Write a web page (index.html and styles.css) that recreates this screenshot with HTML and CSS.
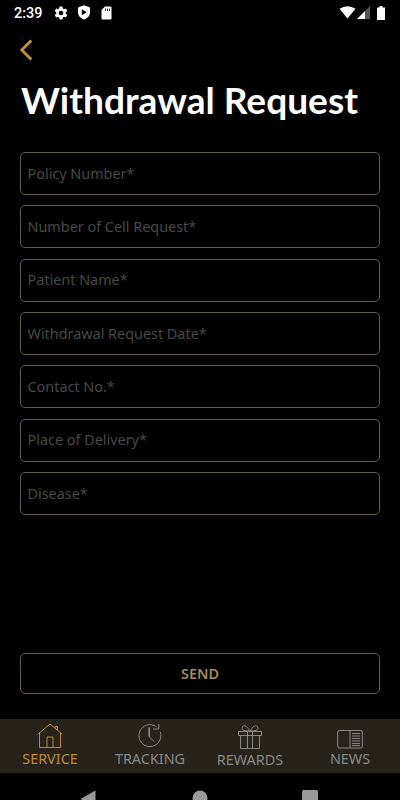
FILE: index.html
```html
<!DOCTYPE html>
<html lang="en">
<head>
    <meta charset="UTF-8">
    <meta name="viewport" content="width=device-width, initial-scale=1.0">
    <title>Withdrawal Request</title>
    <link rel="stylesheet" href="styles.css">
</head>
<body>
    <div class="status-bar">
        <span class="time">2:39</span>
        <svg class="gear" width="14" height="14" viewBox="0 0 24 24"><path fill="#fff" fill-rule="evenodd" d="M9.5 1h5l.6 3.300 2 1.200L20.300 4.300l2.500 4.400-2.600 2.100v2.400l2.600 2.100-2.500 4.400-3.200-1.200-2 1.200-.6 3.300h-5l-.6-3.300-2-1.200-3.200 1.200-2.500-4.400 2.600-2.100v-2.400L1.200 8.700l2.500-4.400 3.200 1.200 2-1.200zM12 8a4 4 0 1 0 0 8 4 4 0 0 0 0-8z"/></svg>
        <svg class="shield" width="14" height="15" viewBox="0 0 14 15"><path fill="#fff" d="M7 .3L13 2.500v4.700c0 3.400-2.500 6-6 7.300-3.500-1.300-6-3.900-6-7.300V2.500z"/><path d="M4.800 4.300v6l5-3z"/></svg>
        <svg class="sd" width="11" height="14" viewBox="0 0 11 14"><path fill="#fff" d="M4 .5h5.500q1 0 1 1v11q0 1-1 1h-8q-1 0-1-1V4z"/><path stroke="#000" stroke-width=".8" d="M4.500 2.500v2.500M6.500 2.500v2.500M8.500 2.500v2.500"/></svg>
        <span class="spacer"></span>
        <svg class="wifi" width="17" height="13" viewBox="0 0 17 13"><path fill="#fff" d="M8.500 12.500L.5 2.800Q8.500-2.300 16.500 2.800z"/></svg>
        <svg class="signal" width="13" height="13" viewBox="0 0 13 13"><path fill="#555" d="M13 0v13H0z"/><path fill="#fff" d="M8 5v8H0z"/></svg>
        <svg class="battery" width="8" height="14" viewBox="0 0 8 14"><path fill="#fff" d="M2.500 0h3v1.500H8V14H0V1.500h2.500z"/></svg>
    </div>

    <div class="header">
        <svg width="14" height="22" viewBox="0 0 14 22"><path fill="none" stroke="#c3903b" stroke-width="2.800" d="M11.300 1.500L1.800 11l9.500 9.500"/></svg>
        <h1>Withdrawal Request</h1>
    </div>

    <form class="form">
        <input type="text" placeholder="Policy Number*">
        <input type="text" placeholder="Number of Cell Request*">
        <input type="text" placeholder="Patient Name*">
        <input type="text" placeholder="Withdrawal Request Date*">
        <input type="text" placeholder="Contact No.*">
        <input type="text" placeholder="Place of Delivery*">
        <input type="text" placeholder="Disease*">
        <button type="button" class="send-btn">SEND</button>
    </form>

    <div class="tabs">
        <div class="tab active">
            <svg width="26" height="26" viewBox="0 0 26 26"><path d="M.7 11.300L13 1l12.300 10.300M2.500 10v14.500h21V10M10 24.500V14h6v10.500M18 5V3.500h2.500v4"/></svg>
            <span>SERVICE</span>
        </div>
        <div class="tab">
            <svg width="26" height="26" viewBox="0 0 26 26"><path d="M19.500 3.800A11 11 0 1 0 23.300 9M21.800 1v5H16M12.500 4.500V14l4.500 4.500M11.800 4.500V13.500"/></svg>
            <span>TRACKING</span>
        </div>
        <div class="tab rewards">
            <svg width="26" height="26" viewBox="0 0 26 26"><path d="M1.500 7.500h23v4h-23zM3.500 11.500v13h19v-13M10.500 7.500v17M15.500 7.500v17M12.500 7Q5 7 5 4.500C5 .5 10 .5 12.500 7zM13.500 7Q21 7 21 4.500C21 .5 16 .5 13.500 7z"/></svg>
            <span>REWARDS</span>
        </div>
        <div class="tab">
            <svg width="26" height="26" viewBox="0 0 26 26"><rect x=".7" y="7.500" width="24.600" height="17.500" rx="1.500"/><path d="M13 7.500v17.500M15 10.500h8M15 13h8M15 15.500h8M15 18h8M15 20.500h8M15 22.500h8"/></svg>
            <span>NEWS</span>
        </div>
    </div>

    <div class="nav-bar">
        <svg width="18" height="18" viewBox="0 0 18 18"><path d="M15.500.5v17L.5 9z"/></svg>
        <svg width="16" height="16" viewBox="0 0 16 16"><circle cx="8" cy="8" r="7.500"/></svg>
        <svg width="16" height="16" viewBox="0 0 16 16"><rect width="16" height="16" rx="1.500"/></svg>
    </div>
</body>
</html>
```
FILE: styles.css
```css
body {
    height: 800px;
    margin: 0;
    overflow: hidden;
    background-color: #000;
    font-family: "Noto Sans", "Open Sans", sans-serif;
}
svg {
    display: block;
    flex: none;
}
.status-bar {
    display: flex;
    align-items: center;
    height: 25px;
    padding: 0 15px 0 14px;
    color: #fff;
}
.time {
    width: 40px;
    padding-top: 1px;
    font: 500 14.5px Roboto, sans-serif;
}
.shield {
    margin-left: 9px;
}
.sd {
    margin-left: 10px;
}
.spacer {
    flex: 1;
}
.signal {
    margin-left: 1px;
}
.battery {
    margin-left: 7px;
}
.header {
    height: 127px;
    padding: 14px 20px 0;
    box-sizing: border-box;
}
h1 {
    margin: 14px 0 0 1px;
    color: #fff;
    font: bold 37.1px/50px Lato, sans-serif;
    white-space: nowrap;
}
.form {
    display: flex;
    flex-direction: column;
    gap: 10.35px;
    height: 567px;
    padding: 0 20px;
    box-sizing: border-box;
}
input {
    height: 43px;
    padding: 0 6.500px 1px;
    border: 1.500px solid #625e43;
    border-radius: 5px;
    box-sizing: border-box;
    background: none;
    color: #fff;
    font: 14.4px "Noto Sans", sans-serif;
}
input::placeholder {
    color: #484848;
}
.send-btn {
    height: 41px;
    margin: auto 0 25px;
    padding-bottom: 2px;
    border: 1px solid #6d5d37;
    border-radius: 5px;
    background: none;
    color: #a18c57;
    font: 600 14.4px "Noto Sans", sans-serif;
}
.tabs {
    display: flex;
    height: 54px;
    background-color: #27221a;
}
.tab {
    display: flex;
    flex: 1;
    flex-direction: column;
    align-items: center;
    padding-top: 4px;
    color: #888;
    font-size: 14.4px;
    line-height: 19px;
}
.tab svg {
    fill: none;
    stroke: currentColor;
}
.tab.active {
    color: #bd8a39;
}
.tab.rewards {
    padding-top: 5px;
}
.nav-bar {
    display: flex;
    justify-content: space-between;
    padding: 17px 82px 0 80px;
    fill: #999;
}
```
